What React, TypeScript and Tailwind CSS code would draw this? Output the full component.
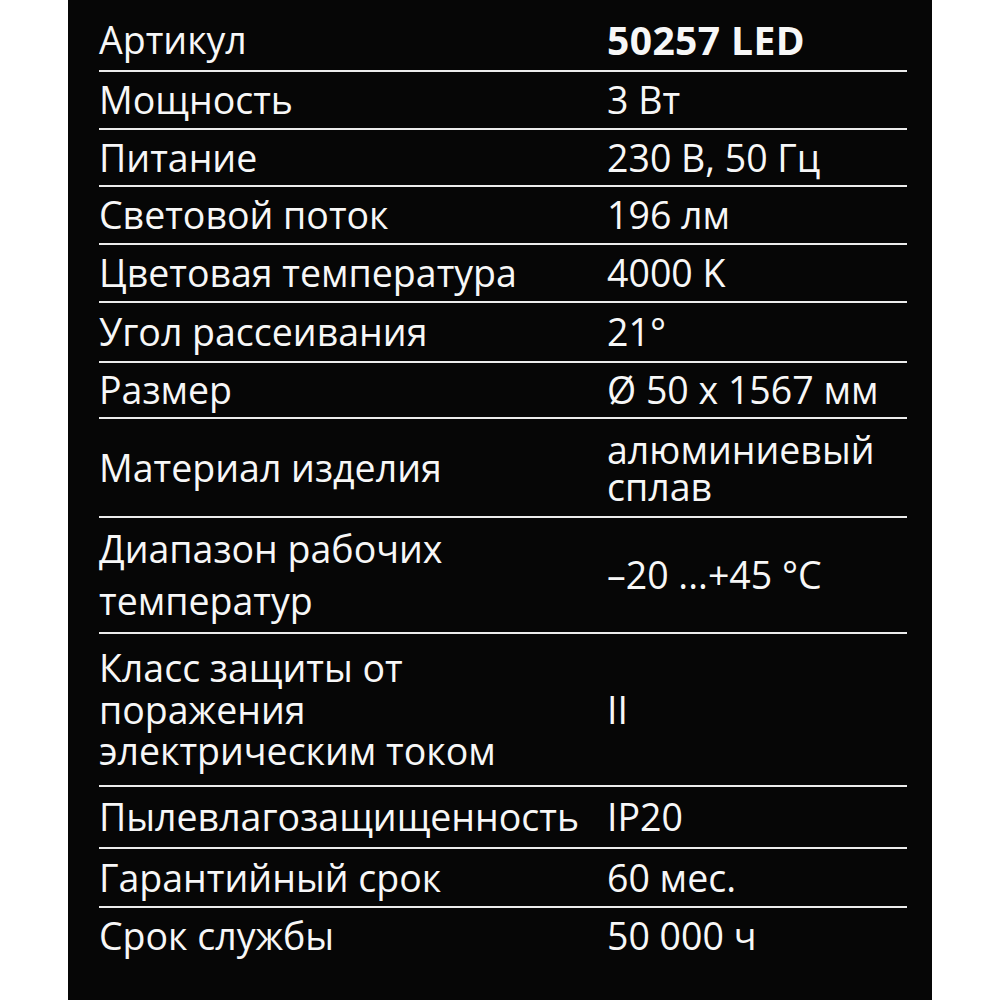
import React from "react";

// Характеристики светильника — таблица на чёрном фоне

type Row = {
  label: React.ReactNode;
  value: React.ReactNode;
  h: string;
  last?: boolean;
};

const ROWS: Row[] = [
  {
    label: "Артикул",
    value: <span className="font-bold text-[39px] tracking-[0.4px]">50257 LED</span>,
    h: "h-[72px] pt-[9px]",
  },
  { label: "Мощность", value: "3 Вт", h: "h-[58px]" },
  { label: "Питание", value: "230 В, 50 Гц", h: "h-[57px]" },
  { label: "Световой поток", value: "196 лм", h: "h-[58px]" },
  { label: "Цветовая температура", value: "4000 K", h: "h-[58px]" },
  { label: "Угол рассеивания", value: "21°", h: "h-[60px]" },
  { label: "Размер", value: "Ø 50 x 1567 мм", h: "h-[56px]" },
  {
    label: "Материал изделия",
    value: <span className="block leading-[37px]">алюминиевый<br />сплав</span>,
    h: "h-[99px]",
  },
  {
    label: <span className="block leading-[52px]">Диапазон рабочих<br />температур</span>,
    value: "–20 ...+45 °C",
    h: "h-[116px]",
  },
  {
    label: (
      <span className="block leading-[41.5px]">
        Класс защиты от<br />поражения<br />электрическим током
      </span>
    ),
    value: "II",
    h: "h-[153px]",
  },
  { label: "Пылевлагозащищенность", value: "IP20", h: "h-[62px]" },
  { label: "Гарантийный срок", value: "60 мес.", h: "h-[59px]" },
  { label: "Срок службы", value: "50 000 ч", h: "h-[56px]", last: true },
];

export default function App() {
  return (
    <div className="w-[1000px] h-[1000px] bg-white flex justify-center">
      <div
        className="w-[864px] h-full bg-[#060606] pl-[31px] pr-[25px] text-[#f7f7f7] text-[37.5px] leading-none"
        style={{ fontFamily: '"Open Sans", "Noto Sans", sans-serif' }}
      >
        {ROWS.map((r, i) => (
          <div
            key={i}
            className={`flex items-center ${r.h} ${r.last ? "" : "border-b-2 border-[#ececec]"}`}
          >
            <div className="w-[508px] shrink-0 whitespace-nowrap">{r.label}</div>
            <div className="whitespace-nowrap">{r.value}</div>
          </div>
        ))}
      </div>
    </div>
  );
}
